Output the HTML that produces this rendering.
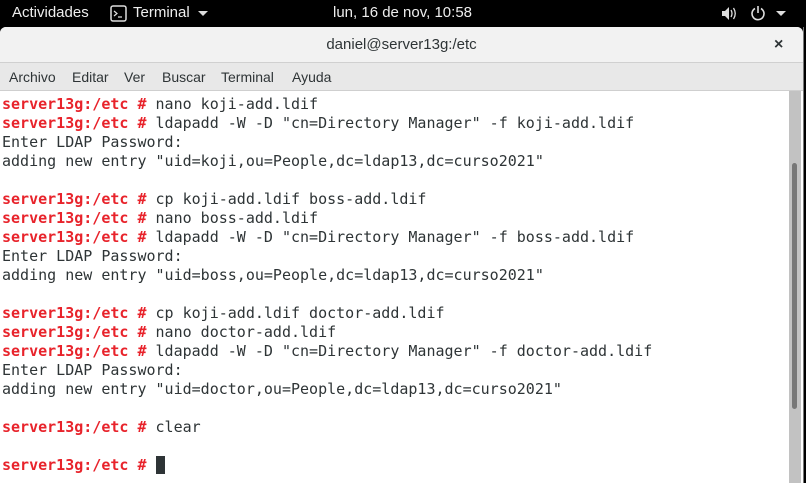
<!DOCTYPE html>
<html><head><meta charset="utf-8"><style>
html,body{margin:0;padding:0;width:806px;height:483px;overflow:hidden;background:#000;font-family:"Liberation Sans","DejaVu Sans",sans-serif}
.top{position:absolute;left:0;top:0;width:806px;height:27px;background:#000;color:#eee;font-size:15px}
.top span{position:absolute;top:4px}
.win{position:absolute;left:0;top:27px;width:803px;height:456px;background:#fff;border-radius:6px 6px 0 0;overflow:hidden}
.hdr{position:absolute;left:0;top:0;width:803px;height:35px;background:#f2f2f2;border-bottom:1px solid #d0d0d0;text-align:center;font-size:15px;color:#2e3436;line-height:36px}
.menu{position:absolute;left:0;top:36px;width:803px;height:27px;background:#e8e8e8;border-bottom:1px solid #cfcfcf;font-size:14px;color:#2e3436}
.menu span{position:absolute;top:6px}
.term{position:absolute;left:2px;top:68px;font-family:"DejaVu Sans Mono","Liberation Mono",monospace;font-size:15px;line-height:19px;color:#2e3436;white-space:pre;margin:0}
.p{color:#e8232b;font-weight:bold}
.sb{position:absolute;left:789px;top:64px;width:12px;height:392px;background:#c2c2c2}
.th{position:absolute;left:3px;top:72px;width:5px;height:246px;background:#777;border-radius:3px}
.rb{position:absolute;left:803px;top:27px;width:3px;height:456px;background:#000;border-left:1px solid #777}
</style></head><body>
<div class="top">
<span style="left:12px">Actividades</span>
<svg style="position:absolute;left:110px;top:5px" width="17" height="17"><rect x="1" y="1" width="15" height="15" rx="2" fill="none" stroke="#ddd" stroke-width="1.5"/><path d="M4 6l3 2.5-3 2.5M8 12h4" stroke="#ddd" stroke-width="1.2" fill="none"/></svg>
<span style="left:133px">Terminal</span>
<svg style="position:absolute;left:198px;top:11px" width="10" height="6"><path d="M0 0h10L5 5z" fill="#ddd"/></svg>
<span style="left:333px">lun, 16 de nov, 10:58</span>
<svg style="position:absolute;left:721px;top:6px" width="16" height="15"><path d="M1 5h3l4-4v13l-4-4H1z" fill="#ddd"/><path d="M10 4q2 3.5 0 7M12.5 2q3.5 5.5 0 11" stroke="#ddd" stroke-width="1.3" fill="none"/></svg>
<svg style="position:absolute;left:750px;top:5px" width="16" height="16"><path d="M5 3.5A6 6 0 1 0 11 3.5" stroke="#ddd" stroke-width="1.6" fill="none"/><path d="M8 1v7" stroke="#ddd" stroke-width="1.6"/></svg>
<svg style="position:absolute;left:776px;top:11px" width="10" height="6"><path d="M0 0h10L5 5z" fill="#ddd"/></svg>
</div>
<div class="win">
<div class="hdr">daniel@server13g:/etc<span style="position:absolute;left:774px;top:0;font-weight:bold;font-size:16px">×</span></div>
<div class="menu"><span style="left:9px">Archivo</span><span style="left:72px">Editar</span><span style="left:124px">Ver</span><span style="left:162px">Buscar</span><span style="left:221px">Terminal</span><span style="left:292px">Ayuda</span></div>
<pre class="term"><span class="p">server13g:/etc #</span> nano koji-add.ldif
<span class="p">server13g:/etc #</span> ldapadd -W -D "cn=Directory Manager" -f koji-add.ldif
Enter LDAP Password:
adding new entry "uid=koji,ou=People,dc=ldap13,dc=curso2021"

<span class="p">server13g:/etc #</span> cp koji-add.ldif boss-add.ldif
<span class="p">server13g:/etc #</span> nano boss-add.ldif
<span class="p">server13g:/etc #</span> ldapadd -W -D "cn=Directory Manager" -f boss-add.ldif
Enter LDAP Password:
adding new entry "uid=boss,ou=People,dc=ldap13,dc=curso2021"

<span class="p">server13g:/etc #</span> cp koji-add.ldif doctor-add.ldif
<span class="p">server13g:/etc #</span> nano doctor-add.ldif
<span class="p">server13g:/etc #</span> ldapadd -W -D "cn=Directory Manager" -f doctor-add.ldif
Enter LDAP Password:
adding new entry "uid=doctor,ou=People,dc=ldap13,dc=curso2021"

<span class="p">server13g:/etc #</span> clear

<span class="p">server13g:/etc #</span> <span style="background:#2e3436"> </span></pre>
<div class="sb"><div class="th"></div></div>
</div>
<div class="rb"></div>
</body></html>
